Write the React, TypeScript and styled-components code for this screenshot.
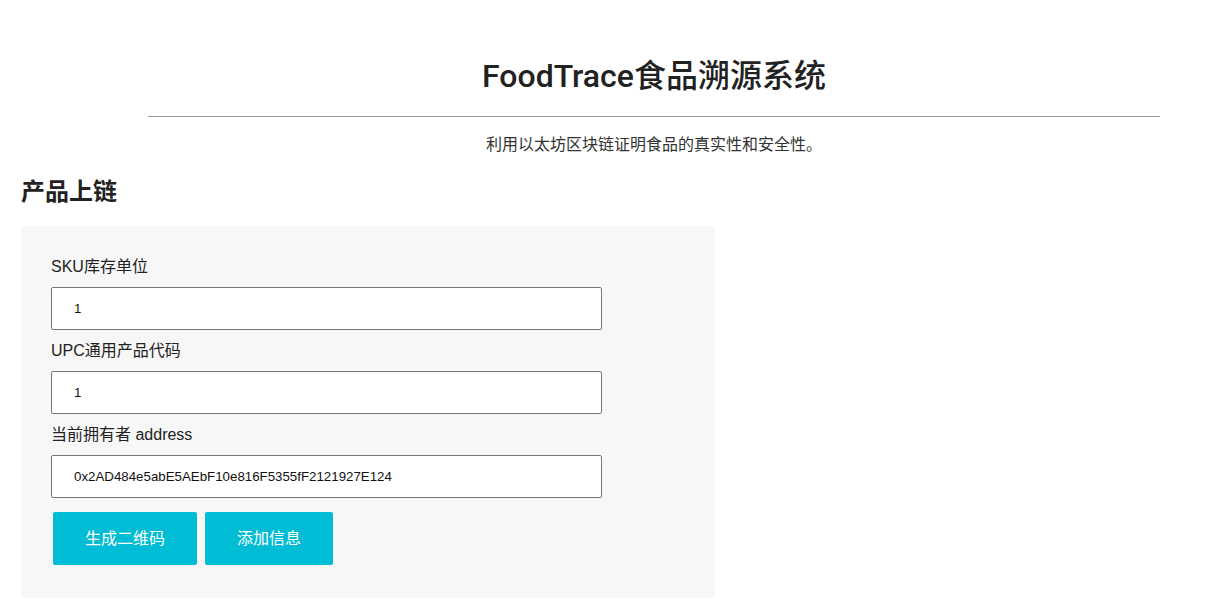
import React from "react";
import styled, { createGlobalStyle } from "styled-components";

const GlobalStyle = createGlobalStyle`
  html, body {
    margin: 0;
    padding: 0;
    background: #ffffff;
  }
  body {
    font-family: "Liberation Sans", "Noto Sans CJK SC", sans-serif;
    color: #222222;
  }
  * { box-sizing: border-box; }
`;

const Page = styled.div`
  padding: 0 0 0 21px;
`;

const Header = styled.header`
  margin: 0 70px 0 127px;
  text-align: center;
`;

const Title = styled.h1`
  margin: 0;
  padding-top: 56px;
  font-family: Roboto, "Noto Sans CJK SC", sans-serif;
  font-size: 32px;
  font-weight: 500;
  line-height: 40px;
  color: #222222;
`;

const Rule = styled.hr`
  margin: 20px 0 0;
  border: 0;
  border-top: 1px solid #9b9b9b;
  height: 0;
`;

const Subtitle = styled.p`
  margin: 17px 0 0;
  font-size: 16px;
  line-height: 22px;
  color: #333333;
`;

const SectionTitle = styled.h2`
  margin: 21px 0 0;
  font-size: 24px;
  font-weight: 700;
  line-height: 30px;
  color: #222222;
`;

const Panel = styled.form`
  margin-top: 19px;
  width: 694px;
  background: #f7f7f7;
  border-radius: 4px;
  padding: 31px 30px 33px;
  display: flex;
  flex-direction: column;
`;

const Label = styled.label<{ $first?: boolean }>`
  display: block;
  margin-top: ${(p) => (p.$first ? "0" : "11px")};
  margin-bottom: 10px;
  font-size: 16px;
  line-height: 20px;
  color: #222222;
`;

const Input = styled.input`
  display: block;
  width: 551px;
  height: 43px;
  padding: 0 22px;
  border: 1px solid #777777;
  border-radius: 2px;
  background: #ffffff;
  font-family: "Liberation Sans", sans-serif;
  font-size: 13.3px;
  color: #111111;
  outline: none;
`;

const ButtonRow = styled.div`
  display: flex;
  gap: 8px;
  margin: 14px 0 0 2px;
`;

const Button = styled.button`
  height: 53px;
  padding: 0 32px;
  border: 0;
  border-radius: 2px;
  background: #00bcd4;
  color: #ffffff;
  font-family: "Liberation Sans", "Noto Sans CJK SC", sans-serif;
  font-size: 16px;
  line-height: 20px;
  cursor: pointer;
`;

export default function App() {
  return (
    <>
      <GlobalStyle />
      <Page>
        <Header>
          <Title>FoodTrace食品溯源系统</Title>
          <Rule />
          <Subtitle>利用以太坊区块链证明食品的真实性和安全性。</Subtitle>
        </Header>
        <SectionTitle>产品上链</SectionTitle>
        <Panel onSubmit={(e) => e.preventDefault()}>
          <Label $first htmlFor="sku">SKU库存单位</Label>
          <Input id="sku" defaultValue="1" />
          <Label htmlFor="upc">UPC通用产品代码</Label>
          <Input id="upc" defaultValue="1" />
          <Label htmlFor="owner">当前拥有者 address</Label>
          <Input id="owner" defaultValue="0x2AD484e5abE5AEbF10e816F5355fF2121927E124" />
          <ButtonRow>
            <Button type="button">生成二维码</Button>
            <Button type="button">添加信息</Button>
          </ButtonRow>
        </Panel>
      </Page>
    </>
  );
}
